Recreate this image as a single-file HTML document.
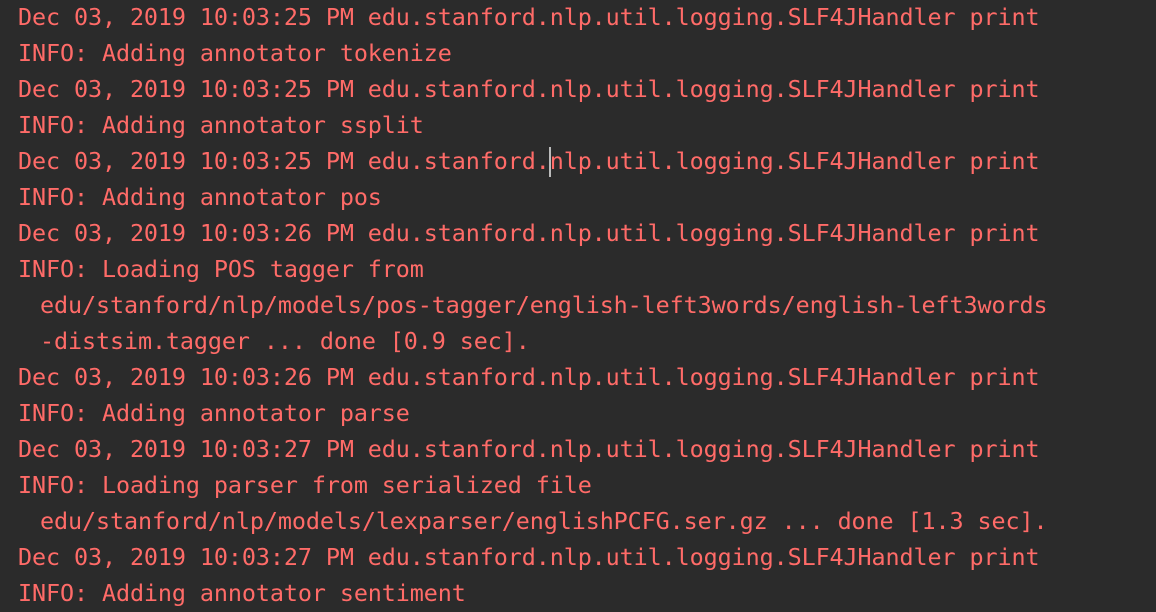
<!DOCTYPE html>
<html><head><style>
html,body{margin:0;padding:0;background:#2b2b2b;width:1156px;height:612px;overflow:hidden}
.w{position:absolute;left:18px;top:-1px;font-family:"DejaVu Sans Mono","Liberation Mono",monospace;font-size:23.4px;letter-spacing:-0.09px;line-height:36px;color:#ff6b68;white-space:pre}
.i{padding-left:22px}
.c{position:absolute;left:549px;top:147px;width:2px;height:30px;background:#bbb}
</style></head><body>
<div class="w">Dec 03, 2019 10:03:25 PM edu.stanford.nlp.util.logging.SLF4JHandler print
INFO: Adding annotator tokenize
Dec 03, 2019 10:03:25 PM edu.stanford.nlp.util.logging.SLF4JHandler print
INFO: Adding annotator ssplit
Dec 03, 2019 10:03:25 PM edu.stanford.nlp.util.logging.SLF4JHandler print
INFO: Adding annotator pos
Dec 03, 2019 10:03:26 PM edu.stanford.nlp.util.logging.SLF4JHandler print
INFO: Loading POS tagger from
<span class="i">edu/stanford/nlp/models/pos-tagger/english-left3words/english-left3words</span>
<span class="i">-distsim.tagger ... done [0.9 sec].</span>
Dec 03, 2019 10:03:26 PM edu.stanford.nlp.util.logging.SLF4JHandler print
INFO: Adding annotator parse
Dec 03, 2019 10:03:27 PM edu.stanford.nlp.util.logging.SLF4JHandler print
INFO: Loading parser from serialized file
<span class="i">edu/stanford/nlp/models/lexparser/englishPCFG.ser.gz ... done [1.3 sec].</span>
Dec 03, 2019 10:03:27 PM edu.stanford.nlp.util.logging.SLF4JHandler print
INFO: Adding annotator sentiment</div>
<div class="c"></div>
</body></html>
